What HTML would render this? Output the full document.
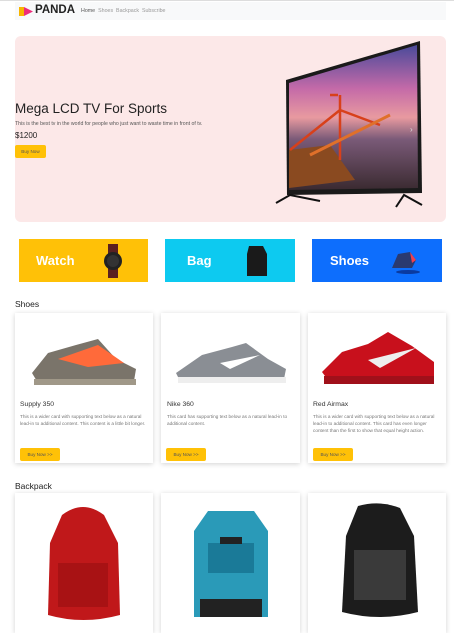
<!DOCTYPE html><html><head><style>
*{margin:0;padding:0;box-sizing:border-box}
body{width:454px;height:624px;overflow:hidden;background:#fff;font-family:"Liberation Sans",sans-serif;position:relative}
.a{position:absolute}
.nav{left:15px;top:2px;width:431px;height:18px;background:#f8f9fa}
.card{background:#fff;box-shadow:0 1px 5px rgba(0,0,0,.18)}
.t{font-size:6.8px;color:#333}
.p{font-size:4.7px;color:#777;line-height:7px}
.btn{background:#ffc107;font-size:4.6px;color:#555;border-radius:2px;width:40px;height:13px;line-height:13px;text-align:center}
.cat{height:43px;color:#fff;font-weight:bold;font-size:13px;line-height:43px;padding-left:17px}
</style></head><body>
<div style="position:absolute;left:0;top:0;width:454px;height:1px;background:#ddd"></div>
<div class="a nav"></div>
<svg class="a" style="left:19px;top:7px" width="14" height="9"><path d="M0 0h5l4 4.5-4 4.5H0z" fill="#f7b500"/><path d="M5 0l9 4.5-9 4.5z" fill="#ee2b7a"/></svg>
<div class="a" style="left:35px;top:4px;font-size:11.5px;font-weight:bold;color:#222">PANDA</div>
<div class="a" style="left:81px;top:7.5px;font-size:5.3px;color:#999"><span style="color:#555">Home</span>&nbsp;&nbsp;Shoes&nbsp;&nbsp;Backpack&nbsp;&nbsp;Subscribe</div>
<div class="a" style="left:15px;top:36px;width:431px;height:186px;background:#fce8e8;border-radius:6px"></div>
<div class="a" style="left:15px;top:101px;font-size:13.5px;color:#222">Mega LCD TV For Sports</div>
<div class="a" style="left:15px;top:121px;font-size:5.2px;color:#555">This is the best tv in the world for people who just want to waste time in front of tv.</div>
<div class="a" style="left:15px;top:131px;font-size:8px;color:#222">$1200</div>
<div class="a btn" style="left:15px;top:145px;width:31px;height:13px;font-size:4.6px">Buy Now</div>
<svg class="a" style="left:260px;top:30px" width="194" height="194">
<defs><linearGradient id="sky" x1="0" y1="0" x2="0" y2="1"><stop offset="0" stop-color="#4a4a9a"/><stop offset=".3" stop-color="#c46aa8"/><stop offset=".5" stop-color="#e89aa0"/><stop offset=".65" stop-color="#7a5a78"/><stop offset="1" stop-color="#3a2a30"/></linearGradient></defs>
<path d="M26 50L160 11 162 163 27 165z" fill="#1a1a1a"/>
<path d="M29 53L157 15 158 158 29 160z" fill="url(#sky)"/>
<path d="M29 120L70 115 95 150 29 158z" fill="#8a4a20"/>
<path d="M80 65v65M70 65h8M80 80l-50 40M80 80l40 15" stroke="#d8401a" stroke-width="2.5" fill="none"/>
<path d="M50 125L130 85" stroke="#e0702a" stroke-width="3"/>
<path d="M16 173l14-8 30 6M136 177l8-12 18 10" stroke="#111" stroke-width="2" fill="none"/>
<text x="150" y="102" font-size="8" fill="#ddd">›</text>
</svg>
<div class="a cat" style="left:19px;top:239px;width:129px;background:#ffc107">Watch</div>
<div class="a cat" style="left:165px;top:239px;width:130px;background:#0dcaf0;padding-left:22px">Bag</div>
<div class="a cat" style="left:312px;top:239px;width:130px;background:#0d6efd;padding-left:18px">Shoes</div>
<svg class="a" style="left:100px;top:244px" width="30" height="34"><rect x="8" y="0" width="10" height="34" fill="#5a2020"/><circle cx="13" cy="17" r="9" fill="#222"/><circle cx="13" cy="17" r="6" fill="#333"/></svg>
<svg class="a" style="left:243px;top:244px" width="30" height="34"><path d="M6 2h14l4 8v22H4V10z" fill="#1a1a1a"/></svg>
<svg class="a" style="left:390px;top:246px" width="32" height="30"><ellipse cx="18" cy="26" rx="12" ry="2" fill="#0a3aa0"/><path d="M2 22L8 8 20 6 26 14 22 22z" fill="#2a3a70"/><path d="M20 6l6 8-4 3z" fill="#f04050"/></svg>
<div class="a" style="left:15px;top:299px;font-size:8.5px;color:#222">Shoes</div>
<div class="a card" style="left:15px;top:313px;width:138px;height:150px"></div>
<div class="a card" style="left:161px;top:313px;width:139px;height:150px"></div>
<div class="a card" style="left:308px;top:313px;width:138px;height:150px"></div>
<svg class="a" style="left:28px;top:333px" width="112" height="55"><path d="M4 40L20 20 48 12 70 6 88 26 108 36 106 48 10 50z" fill="#7a746a"/><path d="M30 26L70 12 96 30 60 34z" fill="#ff6a3a"/><path d="M6 46h102v6H6z" fill="#a09888"/></svg>
<svg class="a" style="left:172px;top:333px" width="118" height="55"><path d="M4 40L30 22 60 14 74 10 96 26 114 36 112 46 8 48z" fill="#8a8e94"/><path d="M48 30l40-8-30 14z" fill="#fff"/><path d="M6 44h108v6H6z" fill="#eee"/></svg>
<svg class="a" style="left:318px;top:326px" width="120" height="62"><path d="M4 46L24 26 50 18 70 6 94 20 116 36 116 50 10 54z" fill="#c8101c"/><path d="M50 34l48-12-36 20z" fill="#eee"/><path d="M6 50h110v8H6z" fill="#a0101a"/></svg>
<div class="a t" style="left:20px;top:401px">Supply 350</div>
<div class="a p" style="left:20px;top:413px;width:128px">This is a wider card with supporting text below as a natural lead-in to additional content. This content is a little bit longer.</div>
<div class="a btn" style="left:20px;top:448px">Buy Now &gt;&gt;</div>
<div class="a t" style="left:167px;top:401px">Nike 360</div>
<div class="a p" style="left:167px;top:413px;width:128px">This card has supporting text below as a natural lead-in to additional content.</div>
<div class="a btn" style="left:166px;top:448px">Buy Now &gt;&gt;</div>
<div class="a t" style="left:313px;top:401px">Red Airmax</div>
<div class="a p" style="left:313px;top:413px;width:130px">This is a wider card with supporting text below as a natural lead-in to additional content. This card has even longer content than the first to show that equal height action.</div>
<div class="a btn" style="left:313px;top:448px">Buy Now &gt;&gt;</div>
<div class="a" style="left:15px;top:481px;font-size:8.5px;color:#222">Backpack</div>
<div class="a card" style="left:15px;top:493px;width:138px;height:140px"></div>
<div class="a card" style="left:161px;top:493px;width:139px;height:140px"></div>
<div class="a card" style="left:308px;top:493px;width:138px;height:140px"></div>
<svg class="a" style="left:38px;top:503px" width="90" height="121"><path d="M24 12Q45 -4 66 12L80 40 82 112Q45 122 10 112L12 40z" fill="#c0181a"/><path d="M20 60h50v44H20z" fill="#a81214"/></svg>
<svg class="a" style="left:186px;top:503px" width="90" height="121"><path d="M22 8h46l14 20v86H8V28z" fill="#2a9ab8"/><path d="M22 40h46v30H22z" fill="#1a7a98"/><path d="M14 96h62v18H14z" fill="#222"/><rect x="34" y="34" width="22" height="7" fill="#222"/></svg>
<svg class="a" style="left:330px;top:500px" width="96" height="124"><path d="M28 6Q50 0 70 8L84 36 88 112Q50 122 12 112L16 36z" fill="#1c1c1c"/><path d="M24 50h52v50H24z" fill="#3a3a3a"/></svg>
</body></html>
